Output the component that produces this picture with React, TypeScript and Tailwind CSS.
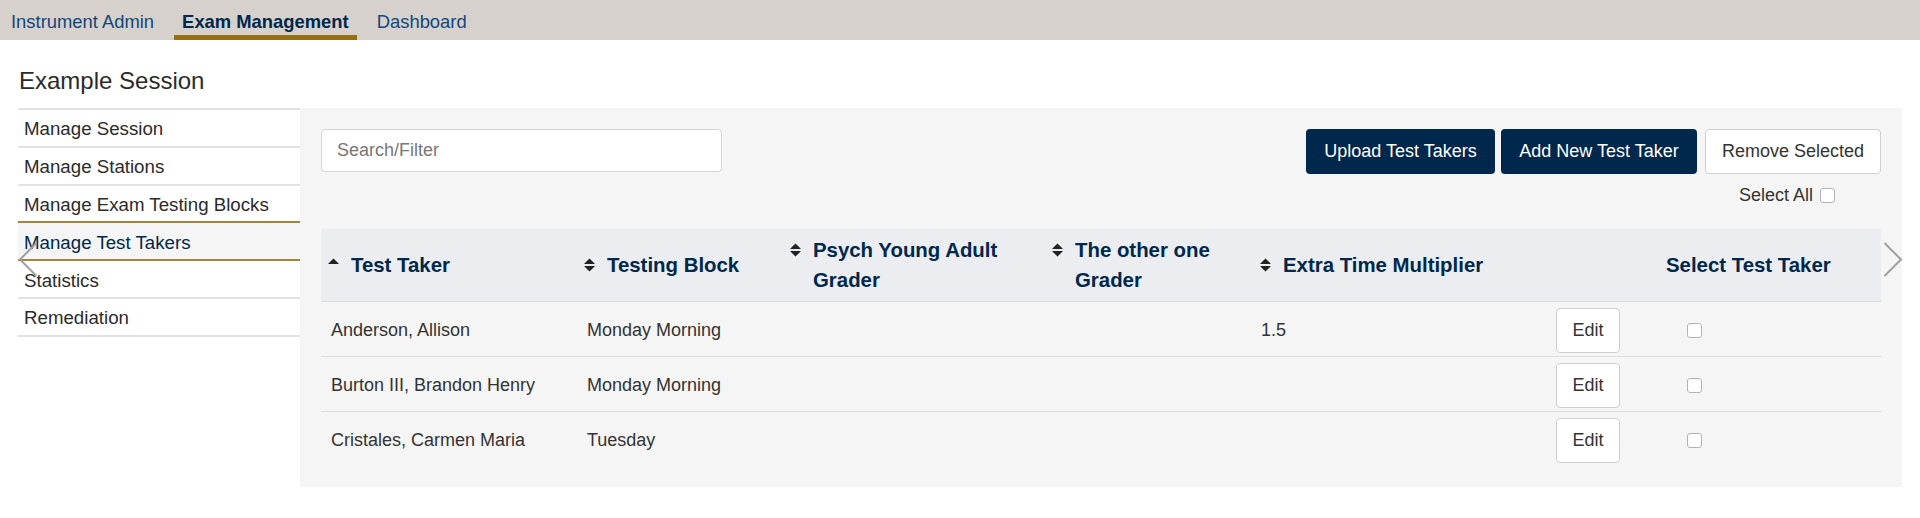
import React from "react";

const tabs = [
  { label: "Instrument Admin", active: false },
  { label: "Exam Management", active: true },
  { label: "Dashboard", active: false }
];

const sideNav = [
  { label: "Manage Session" },
  { label: "Manage Stations" },
  { label: "Manage Exam Testing Blocks", goldBottom: true },
  { label: "Manage Test Takers", active: true },
  { label: "Statistics" },
  { label: "Remediation" }
];

const testTakers = [
  { name: "Anderson, Allison", block: "Monday Morning", multiplier: "1.5" },
  { name: "Burton III, Brandon Henry", block: "Monday Morning", multiplier: "" },
  { name: "Cristales, Carmen Maria", block: "Tuesday", multiplier: "" }
];

function SortIcon({ up }: { up?: boolean }) {
  return (
    <svg width="11" height="16" viewBox="0 0 11 16" fill="currentColor" className="shrink-0 mt-[7px] text-[#222]">
      <path d="M5.5 1.5 L10.6 6.6 Q10.9 7 10.4 7 H0.6 Q0.1 7 0.4 6.6 Z" />
      {!up && <path d="M0.6 9 H10.4 Q10.9 9 10.6 9.4 L5.5 14.5 L0.4 9.4 Q0.1 9 0.6 9 Z" />}
    </svg>
  );
}

function Checkbox() {
  return <span className="inline-block w-[15px] h-[15px] bg-white border border-[#b3b3b3] rounded-[3px]" />;
}

function Chevron({ dir }: { dir: "left" | "right" }) {
  return (
    <svg width="20" height="35" viewBox="0 0 20 35" fill="none" stroke="#a0a0a0" strokeWidth="2">
      {dir === "left" ? <polyline points="18.5,1 2,17.5 18.5,34" /> : <polyline points="1.5,1 18,17.5 1.5,34" />}
    </svg>
  );
}

export default function App() {
  return (
    <div className="relative w-[1920px] h-[518px] bg-white text-[#333] font-['Liberation_Sans',Helvetica,Arial,sans-serif]">
      {/* Top tabs */}
      <div className="h-[40px] bg-[#d6d1cd] flex gap-[12px] pl-[3px]">
        {tabs.map((t) => (
          <div
            key={t.label}
            className={`h-[40px] px-2 pt-[9px] flex items-center text-[18.4px] leading-[22px] border-b-[5px] ${
              t.active ? "border-[#96700f] font-bold text-[#00274c]" : "border-transparent text-[#12467a]"
            }`}
          >
            {t.label}
          </div>
        ))}
      </div>

      <div className="px-[18px]">
        <h1 className="pt-[27px] pb-[13px] pl-[1px] text-[24px] leading-[28px] text-[#2b2b2b]">Example Session</h1>

        <div className="flex">
          {/* Sidebar */}
          <nav className="w-[282px] shrink-0 border-t-2 border-[#e2e2e2]">
            {sideNav.map((item) => (
              <div
                key={item.label}
                className={`h-[37.8px] pl-[6px] pt-[3px] flex items-center text-[18.7px] border-b-2 ${
                  item.active
                    ? "bg-[#f5f5f5] text-[#00274c] border-[#a5833a]"
                    : item.goldBottom
                    ? "text-[#2b2b2b] border-[#a5833a]"
                    : "text-[#2b2b2b] border-[#e2e2e2]"
                }`}
              >
                {item.label}
              </div>
            ))}
          </nav>

          {/* Main panel */}
          <div className="w-[1602px] bg-[#f5f5f5] pt-[21px] pb-[20px] px-[21px]">
            <div className="flex justify-between items-start">
              <div className="w-[401px] h-[43px] bg-white border border-[#d4d4d4] rounded-[4px] flex items-center pl-[15px] text-[18px] text-[#777]">
                Search/Filter
              </div>
              <div className="flex flex-col items-end">
                <div className="flex">
                  <button className="w-[189px] h-[45px] bg-[#00274c] text-white text-[18px] rounded-[4px]">Upload Test Takers</button>
                  <button className="ml-[6px] w-[196px] h-[45px] bg-[#00274c] text-white text-[18px] rounded-[4px]">Add New Test Taker</button>
                  <button className="ml-[8px] w-[176px] h-[45px] bg-white border border-[#cfcfcf] text-[#333] text-[18px] rounded-[4px]">
                    Remove Selected
                  </button>
                </div>
                <div className="mt-[10px] pr-[46px] flex items-center gap-[7px] text-[18px] leading-[22px] text-[#333]">
                  <span>Select All</span>
                  <Checkbox />
                </div>
              </div>
            </div>

            <table className="mt-[23px] w-[1560px] table-fixed border-collapse">
              <colgroup>
                <col className="w-[256px]" />
                <col className="w-[206px]" />
                <col className="w-[262px]" />
                <col className="w-[208px]" />
                <col className="w-[293px]" />
                <col className="w-[110px]" />
                <col className="w-[225px]" />
              </colgroup>
              <thead>
                <tr className="bg-[#ebedf0] border-b border-[#dcdcdc]">
                  {[
                    { label: "Test Taker", up: true },
                    { label: "Testing Block" },
                    { label: "Psych Young Adult Grader" },
                    { label: "The other one Grader" },
                    { label: "Extra Time Multiplier" }
                  ].map((h) => (
                    <th key={h.label} className="py-[6px] pl-[7px] pr-[8px] text-left align-middle font-bold text-[20.4px] leading-[30px] text-[#00274c]">
                      <div className="flex items-start gap-[12px]">
                        <SortIcon up={h.up} />
                        <span>{h.label}</span>
                      </div>
                    </th>
                  ))}
                  <th className="py-[6px]" />
                  <th className="py-[6px] pl-[10px] text-left align-middle font-bold text-[20.4px] leading-[30px] text-[#00274c]">
                    Select Test Taker
                  </th>
                </tr>
              </thead>
              <tbody>
                {testTakers.map((t, i) => (
                  <tr key={t.name} className={i < testTakers.length - 1 ? "border-b border-[#dcdcdc]" : ""}>
                    <td className="h-[55px] pl-[10px] pt-[2px] text-[18px]">{t.name}</td>
                    <td className="h-[55px] pl-[10px] pt-[2px] text-[18px]">{t.block}</td>
                    <td className="h-[55px]" />
                    <td className="h-[55px]" />
                    <td className="h-[55px] pl-[8px] pt-[2px] text-[18px]">{t.multiplier}</td>
                    <td className="h-[55px] pl-[10px] pt-[2px]">
                      <button className="w-[64px] h-[45px] bg-white border border-[#cfcfcf] rounded-[4px] text-[18px] text-[#333]">Edit</button>
                    </td>
                    <td className="h-[55px] pl-[31px] pt-[2px]">
                      <div className="flex items-center">
                        <Checkbox />
                      </div>
                    </td>
                  </tr>
                ))}
              </tbody>
            </table>
          </div>
        </div>
      </div>

      {/* Carousel arrows */}
      <div className="absolute left-[18px] top-[242px]">
        <Chevron dir="left" />
      </div>
      <div className="absolute left-[1883px] top-[242px]">
        <Chevron dir="right" />
      </div>
    </div>
  );
}
